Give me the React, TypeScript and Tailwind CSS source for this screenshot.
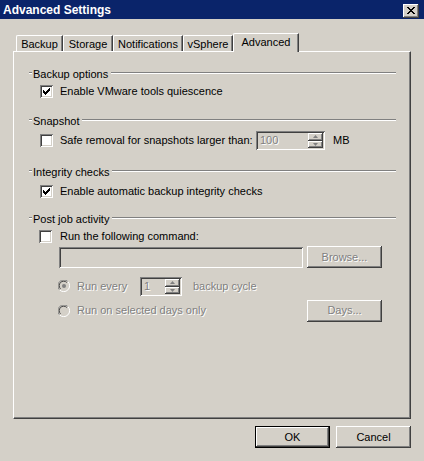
import * as React from 'react'

const raised =
  'shadow-[inset_-1px_-1px_0_#404040,inset_1px_1px_0_#ffffff,inset_-2px_-2px_0_#808080,inset_2px_2px_0_#d4d0c8]'
const sunken =
  'shadow-[inset_1px_1px_0_#808080,inset_-1px_-1px_0_#ffffff,inset_2px_2px_0_#404040,inset_-2px_-2px_0_#d4d0c8]'
const disabledText = 'text-[#808080] [text-shadow:1px_1px_0_#ffffff]'

const CHECK = ['......X', '.....XX', 'X...XXX', 'XX.XXX.', 'XXXXX..', '.XXX...', '..X....']

function Checkbox({ checked }: { checked?: boolean }) {
  return (
    <div className={`w-[13px] h-[13px] bg-white flex items-center justify-center shrink-0 ${sunken}`}>
      {checked && (
        <svg width="7" height="7" viewBox="0 0 7 7" shapeRendering="crispEdges">
          {CHECK.map((row, y) =>
            row.split('').map((c, x) => (c === 'X' ? <rect key={`${x}-${y}`} x={x} y={y} width="1" height="1" fill="#000" /> : null))
          )}
        </svg>
      )}
    </div>
  )
}

function Radio({ checked }: { checked?: boolean }) {
  return (
    <svg width="12" height="12" viewBox="0 0 12 12" className="shrink-0">
      <circle cx="6" cy="6" r="5.5" fill="#d4d0c8" />
      <path d="M1.6 9.9 A5.5 5.5 0 0 1 9.9 1.6" stroke="#808080" strokeWidth="1" fill="none" />
      <path d="M9.9 1.6 A5.5 5.5 0 0 1 1.6 9.9" stroke="#ffffff" strokeWidth="1" fill="none" />
      <path d="M2.5 8.8 A4.3 4.3 0 0 1 8.8 2.5" stroke="#404040" strokeWidth="1" fill="none" />
      {checked && <circle cx="6" cy="6" r="2" fill="#808080" />}
    </svg>
  )
}

function GroupTitle({ label }: { label: string }) {
  return (
    <div className="flex items-center h-[14px]">
      <div className="w-[3px] h-[2px] border-t border-t-[#808080] border-b border-b-white mb-[2px]" />
      <span className="px-[1px]">{label}</span>
      <div className="flex-1 h-[2px] border-t border-t-[#808080] border-b border-b-white ml-[2px] mb-[2px]" />
    </div>
  )
}

function Spin({ value, className }: { value: string; className: string }) {
  return (
    <div className={`flex h-[19px] p-[2px] ${sunken} ${className}`}>
      <div className={`flex-1 flex items-center pl-[2px] ${disabledText}`}>{value}</div>
      <div className="flex flex-col w-[15px]">
        <div className={`h-[8px] flex items-center justify-center ${raised}`}>
          <svg width="5" height="3" viewBox="0 0 5 3"><path d="M2.5 0 L5 3 L0 3 Z" fill="#808080" /></svg>
        </div>
        <div className={`h-[7px] flex items-center justify-center ${raised}`}>
          <svg width="5" height="3" viewBox="0 0 5 3"><path d="M0 0 L5 0 L2.5 3 Z" fill="#808080" /></svg>
        </div>
      </div>
    </div>
  )
}

function Button({ label, disabled, isDefault }: { label: string; disabled?: boolean; isDefault?: boolean }) {
  return (
    <div
      className={
        isDefault
          ? 'w-[75px] h-[22px] flex items-center justify-center shadow-[inset_0_0_0_1px_#000000,inset_-2px_-2px_0_#404040,inset_2px_2px_0_#ffffff,inset_-3px_-3px_0_#808080]'
          : `w-[75px] h-[22px] flex items-center justify-center ${raised}`
      }
    >
      <span className={disabled ? disabledText : ''}>{label}</span>
    </div>
  )
}

const tabs = [
  { label: 'Backup', w: 'w-[47px]' },
  { label: 'Storage', w: 'w-[50px]' },
  { label: 'Notifications', w: 'w-[70px]' },
  { label: 'vSphere', w: 'w-[50px]' }
]

export default function App() {
  return (
    <div className="w-[424px] h-[461px] bg-[#d4d0c8] font-['Liberation_Sans',Arial,sans-serif] text-[11px] leading-none text-black flex flex-col overflow-hidden select-none">
      {/* Title bar */}
      <div className="h-[19px] bg-[#0a246a] flex items-center justify-between pl-[3px] pr-[5px] shrink-0">
        <span className="text-white font-bold text-[12px]">Advanced Settings</span>
        <div className={`w-[16px] h-[14px] flex items-center justify-center mt-[2px] bg-[#d4d0c8] ${raised}`}>
          <svg width="8" height="7" viewBox="0 0 8 7" shapeRendering="crispEdges">
            <path d="M0 0h2v1h-2zM6 0h2v1h-2zM1 1h2v1h-2zM5 1h2v1h-2zM2 2h4v1h-4zM3 3h2v1h-2zM2 4h4v1h-4zM1 5h2v1h-2zM5 5h2v1h-2zM0 6h2v1h-2zM6 6h2v1h-2z" fill="#000" />
          </svg>
        </div>
      </div>

      {/* Tabs */}
      <div className="flex items-end h-[18px] mt-[14px] pl-[16px] shrink-0 relative z-10">
        {tabs.map(t => (
          <div
            key={t.label}
            className={`${t.w} h-[16px] flex items-center justify-center pt-[1px] border-t border-l border-white rounded-tl-[2px] shadow-[inset_-1px_0_0_#808080] border-r border-r-[#404040]`}
          >
            {t.label}
          </div>
        ))}
        <div className="w-[66px] h-[19px] -mb-[1px] bg-[#d4d0c8] flex items-start justify-center pt-[3px] border-t border-l border-white rounded-tl-[2px] border-r border-r-[#404040] shadow-[inset_-1px_0_0_#808080]">
          Advanced
        </div>
      </div>

      {/* Panel */}
      <div className="mx-[13px] h-[368px] shrink-0 border-t border-l border-white border-r border-r-[#404040] border-b border-b-[#404040] shadow-[inset_-1px_-1px_0_#808080] pt-[15px] pl-[15px] pr-[14px]">
        <div className="flex flex-col w-[367px]">
          <GroupTitle label="Backup options" />
          <div className="flex items-center h-[20px] pl-[11px]">
            <Checkbox checked />
            <span className="ml-[7px]">Enable VMware tools quiescence</span>
          </div>

          <div className="mt-[13px]">
            <GroupTitle label="Snapshot" />
          </div>
          <div className="flex items-center h-[20px] mt-[2px] pl-[11px]">
            <Checkbox />
            <span className="ml-[7px] w-[196px]">Safe removal for snapshots larger than:</span>
            <Spin value="100" className="w-[69px]" />
            <span className="ml-[8px]">MB</span>
          </div>

          <div className="mt-[15px]">
            <GroupTitle label="Integrity checks" />
          </div>
          <div className="flex items-center h-[20px] mt-[2px] pl-[11px]">
            <Checkbox checked />
            <span className="ml-[7px]">Enable automatic backup integrity checks</span>
          </div>

          <div className="mt-[11px]">
            <GroupTitle label="Post job activity" />
          </div>
          <div className="flex items-center h-[20px] pl-[10px]">
            <Checkbox />
            <span className="ml-[8px]">Run the following command:</span>
          </div>
          <div className="flex items-center h-[22px] pl-[30px]">
            <div className={`w-[244px] h-[21px] ${sunken}`} />
            <div className="ml-[4px]">
              <Button label="Browse..." disabled />
            </div>
          </div>
          <div className="flex items-center h-[20px] mt-[8px] pl-[29px]">
            <Radio checked />
            <span className={`ml-[7px] w-[63px] ${disabledText}`}>Run every</span>
            <Spin value="1" className="w-[42px]" />
            <span className={`ml-[11px] ${disabledText}`}>backup cycle</span>
          </div>
          <div className="flex items-center h-[23px] mt-[3px] pl-[29px]">
            <Radio />
            <span className={`ml-[7px] w-[230px] ${disabledText}`}>Run on selected days only</span>
            <Button label="Days..." disabled />
          </div>
        </div>
      </div>

      {/* Footer buttons */}
      <div className="flex justify-end gap-[6px] mt-[7px] mr-[13px]">
        <Button label="OK" isDefault />
        <Button label="Cancel" />
      </div>
    </div>
  )
}
